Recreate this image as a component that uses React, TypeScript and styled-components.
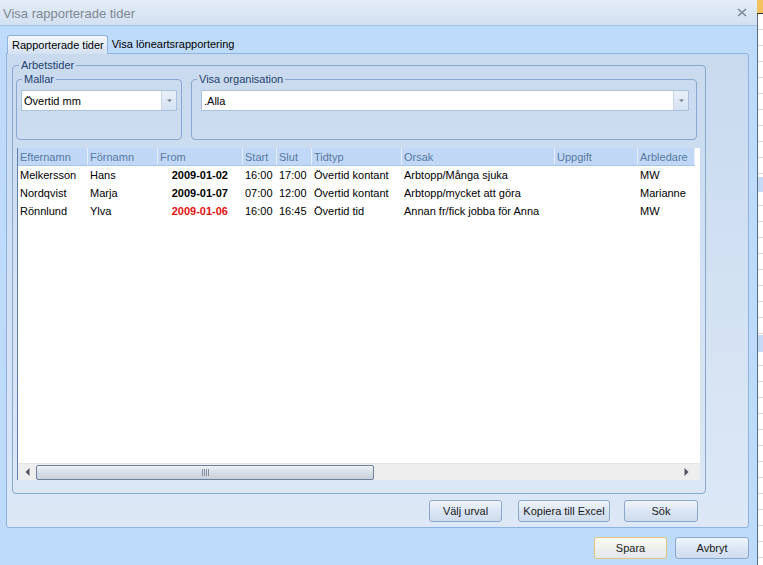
import React from 'react'
import styled, { createGlobalStyle, css } from 'styled-components';

const Global = createGlobalStyle`
  html, body {
    margin: 0;
    padding: 0;
    background: #ffffff;
    font-family: "Liberation Sans", Arial, sans-serif;
    font-size: 11px;
    color: #000;
  }
`;

const Screen = styled.div`
  display: flex;
  width: 763px;
  height: 565px;
  overflow: hidden;
`;

const Dialog = styled.div`
  display: flex;
  flex-flow: column;
  width: 757px;
  height: 565px;
  background: #bfdbfc;
`;

const TitleBar = styled.div`
  display: flex;
  align-items: center;
  justify-content: space-between;
  height: 25px;
  padding: 0 10px 0 3px;
  border-bottom: 1px solid #a8c3e3;
  background: linear-gradient(#e4edf8, #d2e0f1);
`;

const Title = styled.div`
  font-size: 13px;
  color: #808891;
  margin-top: 2px;
`;

const TabStrip = styled.div`
  display: flex;
  align-items: flex-end;
  margin: 9px 0 0 7px;
  height: 18px;
`;

const Tab = styled.div<{ active?: boolean }>`
  display: flex;
  align-items: center;
  height: 18px;
  padding: 0 5px 0 4px;
  white-space: nowrap;
  position: relative;
  z-index: 1;
  ${props => props.active && css`
    border: 1px solid #8db2e3;
    border-bottom: none;
    border-radius: 3px 3px 0 0;
    background: linear-gradient(#f5f8fc, #d3e1f2);
    margin-bottom: -1px;
    padding-right: 3px;
  `}
`;

const Panel = styled.div`
  width: 731px;
  margin-left: 6px;
  padding: 5px 5px 5px 5px;
  border: 1px solid #8db2e3;
  border-radius: 0 3px 3px 3px;
  background: linear-gradient(#c9daef, #dce8f6);
`;

const Group = styled.fieldset`
  margin: 0;
  border: 1px solid #8aa7cf;
  border-radius: 4px;
  min-width: 0;
`;

const Legend = styled.legend<{ shift?: number }>`
  line-height: 13px;
  height: 13px;
  padding: 0 2px;
  margin-left: ${props => props.shift || 0}px;
  color: #1f3f6e;
`;

const Arbetstider = styled(Group)`
  width: 684px;
  padding: 1px 5px 13px 3px;
`;

const GroupRow = styled.div`
  display: flex;
  gap: 9px;
  padding-right: 3px;
`;

const Mallar = styled(Group)`
  width: 156px;
  padding: 4px 4px 28px 4px;
`;

const Org = styled(Group)`
  flex: 1;
  padding: 4px 7px 28px 9px;
`;

const Combo = styled.div`
  display: flex;
  height: 19px;
  border: 1px solid #abc1dc;
  background: #fff;
`;

const ComboText = styled.div`
  flex: 1;
  display: flex;
  align-items: center;
  padding-left: 2px;
  font-size: 11px;
`;

const ComboButton = styled.div`
  width: 14px;
  display: flex;
  align-items: center;
  justify-content: center;
  border-left: 1px solid #c9d7ea;
  background: linear-gradient(#e9f0f9, #d4e1f1);
`;

const Grid = styled.div`
  display: flex;
  flex-flow: column;
  margin: 8px 0 0 1px;
  height: 332px;
  border-left: 1px solid #5f82ad;
  background: #fff;
`;

const cols = '70px 70px 85px 34px 35px 90px 153px 83px 57px';

const HeaderRow = styled.div`
  display: grid;
  grid-template-columns: ${cols};
  height: 17px;
  width: 677px;
  background: #c0d8f6;
  border-bottom: 1px solid #a7c4ea;
`;

const HeaderCell = styled.div`
  display: flex;
  align-items: center;
  padding-left: 2px;
  border-right: 1px solid #e6eefa;
  color: #5878a3;
  white-space: nowrap;
  overflow: hidden;
`;

const Row = styled.div`
  display: grid;
  grid-template-columns: ${cols};
  height: 18px;
`;

const Cell = styled.div<{ date?: boolean; red?: boolean }>`
  display: flex;
  align-items: center;
  padding-left: 2px;
  white-space: nowrap;
  overflow: hidden;
  ${props => props.date && css`
    justify-content: flex-end;
    padding-right: 15px;
    font-weight: bold;
  `}
  ${props => props.red && css`color: #e41010;`}
`;

const Filler = styled.div`
  flex: 1;
`;

const HScroll = styled.div`
  display: flex;
  align-items: center;
  height: 16px;
  border-top: 1px solid #e4e4e4;
  background: #eeeeee;
`;

const Arrow = styled.div<{ w: number }>`
  width: ${props => props.w}px;
  display: flex;
  align-items: center;
  justify-content: center;
`;

const Thumb = styled.div`
  width: 336px;
  height: 13px;
  display: flex;
  align-items: center;
  justify-content: center;
  gap: 1px;
  border: 1px solid #6f819a;
  border-radius: 2px;
  background: linear-gradient(#eff2f6, #d5dce6 55%, #c9d1dc);
`;

const Grip = styled.span`
  width: 1px;
  height: 7px;
  background: #8592a5;
`;

const Track = styled.div`
  flex: 1;
`;

const ButtonRow = styled.div<{ pad: number; top: number }>`
  display: flex;
  justify-content: flex-end;
  margin-top: ${props => props.top}px;
  padding-right: ${props => props.pad}px;
`;

const Button = styled.div<{ w: number; gap?: number; primary?: boolean }>`
  width: ${props => props.w}px;
  height: 20px;
  margin-left: ${props => props.gap || 0}px;
  display: flex;
  align-items: center;
  justify-content: center;
  border: 1px solid #8ea7c8;
  border-radius: 3px;
  background: linear-gradient(#f0f5fb, #dbe6f4 50%, #cfdcee);
  color: #1a1a1a;
  ${props => props.primary && css`
    border-color: #e0c57a;
    background: linear-gradient(#fdfbf3, #eef0ee 50%, #e3e7ee);
  `}
`;

const Strip = styled.div`
  flex: 1;
  display: flex;
  flex-flow: column;
`;

const StripTop = styled.div`
  height: 13px;
  background: #f3c261;
  border-bottom: 1px solid #333;
`;

const StripBody = styled.div`
  flex: 1;
  border-left: 1px solid #5b6d84;
  background:
    linear-gradient(transparent 163px, #c5daf4 163px, #c5daf4 178px, transparent 178px,
      transparent 321px, #c5daf4 321px, #c5daf4 338px, transparent 338px),
    repeating-linear-gradient(#fff 0, #fff 15px, #d8d8d8 15px, #d8d8d8 16px);
`;

const rows = [
  { e: 'Melkersson', f: 'Hans', d: '2009-01-02', s: '16:00', sl: '17:00', t: 'Övertid kontant', o: 'Arbtopp/Många sjuka', a: 'MW' },
  { e: 'Nordqvist', f: 'Marja', d: '2009-01-07', s: '07:00', sl: '12:00', t: 'Övertid kontant', o: 'Arbtopp/mycket att göra', a: 'Marianne' },
  { e: 'Rönnlund', f: 'Ylva', d: '2009-01-06', s: '16:00', sl: '16:45', t: 'Övertid tid', o: 'Annan fr/fick jobba för Anna', a: 'MW', red: true },
];

const headers = ['Efternamn', 'Förnamn', 'From', 'Start', 'Slut', 'Tidtyp', 'Orsak', 'Uppgift', 'Arbledare'];

const DownArrow = () => <svg width="7" height="4" viewBox="0 0 7 4">
  <path d="M1 0.5h5L3.5 3z" fill="#6a7a90" />
</svg>;

export default function App() {
  return <Screen>
    <Global />
    <Dialog>
      <TitleBar>
        <Title>Visa rapporterade tider</Title>
        <svg width="10" height="9" viewBox="0 0 10 9">
          <path d="M1 1l8 7M9 1l-8 7" stroke="#7d8895" strokeWidth="1.6" />
        </svg>
      </TitleBar>

      <TabStrip>
        <Tab active>Rapporterade tider</Tab>
        <Tab>Visa löneartsrapportering</Tab>
      </TabStrip>

      <Panel>
        <Arbetstider>
          <Legend shift={3}>Arbetstider</Legend>
          <GroupRow>
            <Mallar>
              <Legend shift={1}>Mallar</Legend>
              <Combo>
                <ComboText>Övertid mm</ComboText>
                <ComboButton><DownArrow /></ComboButton>
              </Combo>
            </Mallar>
            <Org>
              <Legend shift={-4}>Visa organisation</Legend>
              <Combo>
                <ComboText>.Alla</ComboText>
                <ComboButton><DownArrow /></ComboButton>
              </Combo>
            </Org>
          </GroupRow>

          <Grid>
            <HeaderRow>
              {headers.map(h => <HeaderCell key={h}>{h}</HeaderCell>)}
            </HeaderRow>
            {rows.map(r => <Row key={r.e}>
              <Cell>{r.e}</Cell>
              <Cell>{r.f}</Cell>
              <Cell date red={r.red}>{r.d}</Cell>
              <Cell>{r.s}</Cell>
              <Cell>{r.sl}</Cell>
              <Cell>{r.t}</Cell>
              <Cell>{r.o}</Cell>
              <Cell />
              <Cell>{r.a}</Cell>
            </Row>)}
            <Filler />
            <HScroll>
              <Arrow w={18}>
                <svg width="5" height="8" viewBox="0 0 5 8"><path d="M4.5 0v8L0.5 4z" fill="#4e5560" /></svg>
              </Arrow>
              <Thumb><Grip /><Grip /><Grip /><Grip /></Thumb>
              <Track />
              <Arrow w={27}>
                <svg width="5" height="8" viewBox="0 0 5 8"><path d="M0.5 0v8L4.5 4z" fill="#4e5560" /></svg>
              </Arrow>
            </HScroll>
          </Grid>
        </Arbetstider>

        <ButtonRow pad={45} top={6}>
          <Button w={71}>Välj urval</Button>
          <Button w={90} gap={16}>Kopiera till Excel</Button>
          <Button w={72} gap={14}>Sök</Button>
        </ButtonRow>
      </Panel>

      <ButtonRow pad={8} top={9}>
        <Button w={71} primary>Spara</Button>
        <Button w={72} gap={8}>Avbryt</Button>
      </ButtonRow>
    </Dialog>
    <Strip>
      <StripTop />
      <StripBody />
    </Strip>
  </Screen>;
}
